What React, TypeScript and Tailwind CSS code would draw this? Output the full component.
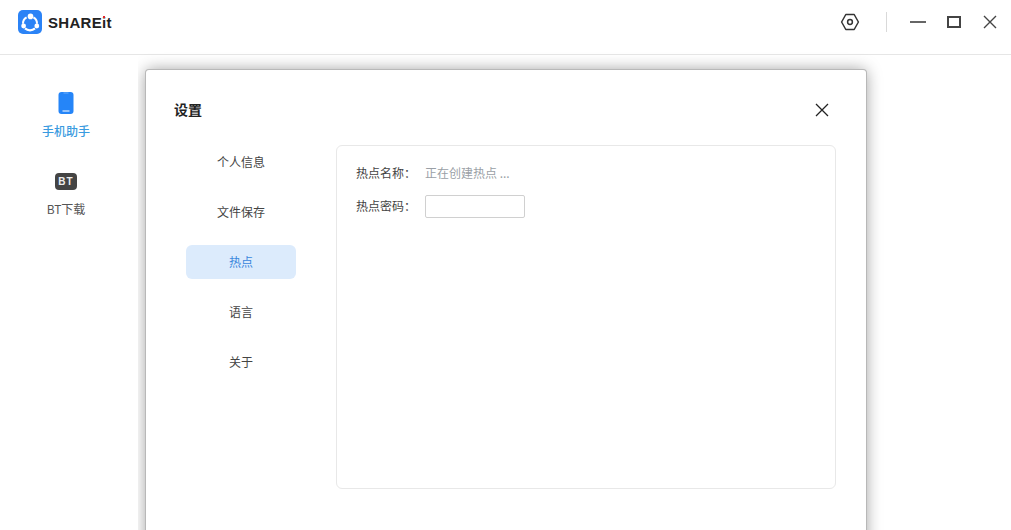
const font = "font-['Noto_Sans_CJK_SC','Liberation_Sans',sans-serif]";

function Logo() {
  return (
    <svg width="24" height="24" viewBox="0 0 24 24" className="shrink-0">
      <rect width="24" height="24" rx="5" fill="#2b83f6" />
      <path d="M8.6 7.4A7 7 0 0 0 5 13.8" fill="none" stroke="#fff" strokeWidth="2" />
      <path d="M15.4 7.4A7 7 0 0 1 19 13.8" fill="none" stroke="#fff" strokeWidth="2" />
      <path d="M7 18.4A7.6 7.6 0 0 0 17 18.4" fill="none" stroke="#fff" strokeWidth="2.2" />
      <circle cx="12.5" cy="6.4" r="2.8" fill="#fff" />
      <circle cx="5.6" cy="16" r="2.4" fill="#fff" />
      <circle cx="18.8" cy="16" r="2.4" fill="#fff" />
    </svg>
  );
}

function TitleBar() {
  return (
    <header className="flex h-[55px] shrink-0 items-center border-b border-[#e6e6e6] bg-white pb-[10px]">
      <div className="ml-[18px] flex items-center gap-[6px]">
        <Logo />
        <span className="font-['Liberation_Sans',sans-serif] text-[15px] leading-none font-bold tracking-[0.3px] text-[#222]">
          SHARE<span className="relative">i<span className="absolute top-[2px] left-[1px] h-[2px] w-[2px] bg-[#e0262c]" /></span>t
        </span>
      </div>
      <div className="ml-auto flex items-center">
        <svg width="20" height="20" viewBox="0 0 20 20" fill="none" stroke="#333" strokeWidth="1.5" className="mr-[26px]">
          <path d="M5.8 2.5h8.4l4.2 7.5-4.2 7.5H5.8L1.6 10z" strokeLinejoin="round" />
          <circle cx="10" cy="10" r="2.4" />
        </svg>
        <div className="mr-[23px] h-[20px] w-px bg-[#d9d9d9]" />
        <div className="mr-[21px] h-[2px] w-[16px] bg-[#666]" />
        <div className="mr-[22px] h-[12px] w-[14px] border-2 border-[#444]" />
        <svg width="14" height="14" viewBox="0 0 14 14" stroke="#444" strokeWidth="1.4" className="mr-[14px]">
          <path d="M1 1l12 12M13 1L1 13" />
        </svg>
      </div>
    </header>
  );
}

function Sidebar() {
  return (
    <aside className="relative z-10 flex w-[138px] shrink-0 flex-col items-center bg-white pt-[36px] pr-[6px]">
      <div className="flex flex-col items-center">
        <svg width="16" height="24" viewBox="0 0 16 24">
          <rect width="15" height="22" x="0.5" y="1" rx="3" fill="#2585f8" />
          <rect x="5.5" y="1.5" width="5" height="1" fill="#6fb0fb" />
          <rect x="4.5" y="19.5" width="7" height="1" fill="#fff" />
        </svg>
        <span className="mt-[7px] text-xs leading-[18px] font-medium text-[#3a9be0]">手机助手</span>
      </div>
      <div className="mt-[33px] flex flex-col items-center">
        <div className="flex h-[17px] w-[22px] items-center justify-center rounded-[4px] bg-[#444]">
          <span className="font-['Liberation_Sans',sans-serif] text-[10px] leading-none font-bold tracking-[1px] text-[#eee]">BT</span>
        </div>
        <span className="mt-[10px] text-xs leading-[18px] text-[#555]">BT下载</span>
      </div>
    </aside>
  );
}

const menu = ["个人信息", "文件保存", "热点", "语言", "关于"];

function Dialog() {
  return (
    <section className="ml-[8px] h-[600px] w-[720px] rounded-t-[3px] bg-white pt-[30px] pr-[30px] pl-[28px] shadow-[0_0_0_1px_#b8b8b8,0_0_16px_rgba(0,0,0,0.4)]">
      <div className="flex h-[22px] items-center justify-between pr-[7px]">
        <h2 className="-mt-[4px] text-sm leading-[22px] font-bold text-[#222]">设置</h2>
        <svg width="14" height="14" viewBox="0 0 14 14" stroke="#222" strokeWidth="1.3" className="-mt-[2px]">
          <path d="M1 1l12 12M13 1L1 13" />
        </svg>
      </div>
      <div className="mt-[23px] flex">
        <nav className="ml-[12px] flex w-[110px] shrink-0 flex-col gap-[16px]">
          {menu.map((item) => (
            <div
              key={item}
              className={
                item === "热点"
                  ? "flex h-[34px] items-center justify-center rounded-[6px] bg-[#dcebfc] text-xs text-[#3a87dc]"
                  : "flex h-[34px] items-center justify-center text-xs text-[#444]"
              }
            >
              {item}
            </div>
          ))}
        </nav>
        <div className="ml-[40px] h-[344px] w-[500px] rounded-[6px] border border-[#e8e8e8] pt-[17px] pl-[19px]">
          <div className="flex h-[20px] items-center text-xs">
            <span className="w-[69px] text-[#444]">热点名称：</span>
            <span className="text-[#9a9fa6]">正在创建热点 ...</span>
          </div>
          <div className="mt-[11px] flex h-[24px] items-center text-xs">
            <span className="-mt-[1px] w-[69px] text-[#444]">热点密码：</span>
            <input className="h-[23px] w-[100px] rounded-[2px] border border-[#d0d0d0] bg-white outline-none" />
          </div>
        </div>
      </div>
    </section>
  );
}

export default function App() {
  return (
    <div className={`flex h-[530px] w-[1011px] flex-col overflow-hidden bg-white ${font}`}>
      <TitleBar />
      <div className="flex min-h-0 flex-1">
        <Sidebar />
        <main className="min-w-0 flex-1 pt-[15px]">
          <Dialog />
        </main>
      </div>
    </div>
  );
}
